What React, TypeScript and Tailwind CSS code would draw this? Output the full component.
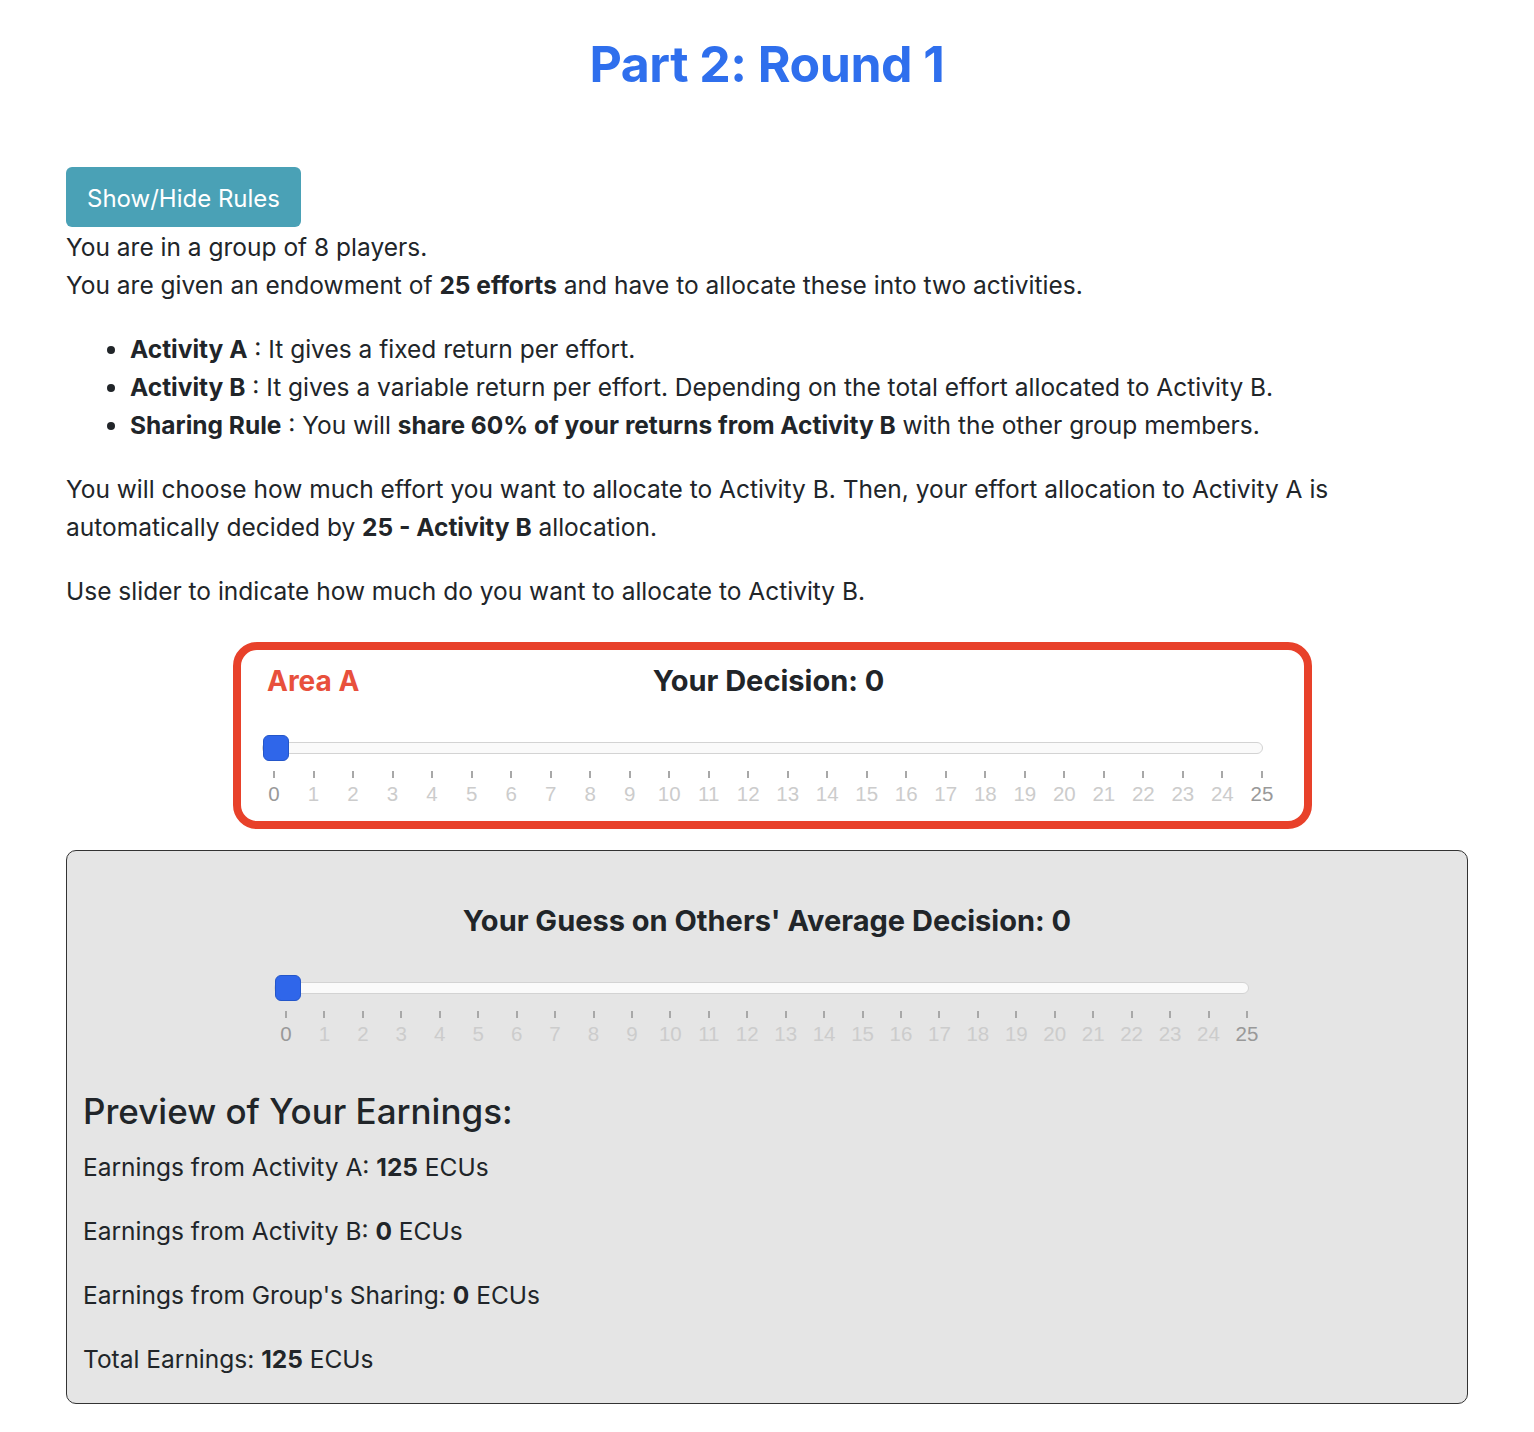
import { useState } from "react"

const ticks = Array.from({ length: 26 }, (_, i) => i) // pip values 0..25

type SliderProps = {
  value: number
  trackWidth: string // tailwind width class for the track
  tickWidth: string // tailwind width class for the pip row
}

// noUiSlider-style track with a square handle and numbered pips underneath
function PipSlider({ value, trackWidth, tickWidth }: SliderProps) {
  return (
    <div className="flex flex-col">
      <div className={`relative h-[12px] rounded-full border border-[#d3d3d3] bg-[#fafafa] ${trackWidth}`}>
        <div className="absolute left-0 top-[-8px] h-[26px] w-[26px] rounded-[6px] border border-[#2456c9] bg-[#2f66ea]" />
      </div>
      <div className={`ml-[12px] mt-[17px] flex justify-between ${tickWidth}`}>
        {ticks.map((t) => (
          <div key={t} className="flex w-0 flex-col items-center">
            <span className="h-[7px] w-[2px] shrink-0 bg-[#a8a8a8]" />
            <span
              className={`mt-[4px] whitespace-nowrap text-[20.5px] leading-[24px] ${
                t === 0 || t === 25 ? "text-[#999999]" : "text-[#cccccc]"
              }`}
              style={{ fontFamily: '"Liberation Sans", Arial, sans-serif' }}
            >
              {t}
            </span>
          </div>
        ))}
      </div>
      <span className="hidden">{value}</span>
    </div>
  )
}

export default function App() {
  const [decision] = useState(0) // own allocation to Activity B
  const [guess] = useState(0) // guess on others' average
  const earningsA = (25 - decision) * 5
  const earningsB = 0
  const sharing = 0

  return (
    <div className="min-h-[1432px] bg-white px-[66px] text-[24.5px] leading-[38px] text-[#212529]" style={{ fontFamily: "Inter, 'Noto Sans', sans-serif" }}>
      <h1 className="pt-[32px] text-center text-[50px] font-bold leading-[64px] tracking-[-0.5px] text-[#2f6fed]">Part 2: Round 1</h1>

      <button className="mt-[71px] h-[60px] w-[235px] rounded-[6px] bg-[#4aa1b6] pt-[3px] text-[24px] text-white">Show/Hide Rules</button>

      <p className="mt-[1px]">You are in a group of 8 players.</p>
      <p>
        You are given an endowment of <b>25 efforts</b> and have to allocate these into two activities.
      </p>

      <ul className="mt-[26px] list-disc pl-[64px]">
        <li><b>Activity A</b> : It gives a fixed return per effort.</li>
        <li><b>Activity B</b> : It gives a variable return per effort. Depending on the total effort allocated to Activity B.</li>
        <li>
          <b>Sharing Rule</b> : You will <b>share 60% of your returns from Activity B</b> with the other group members.
        </li>
      </ul>

      <p className="mt-[26px]">
        You will choose how much effort you want to allocate to Activity B. Then, your effort allocation to Activity A is automatically decided by <b>25 - Activity B</b> allocation.
      </p>

      <p className="mt-[26px]">Use slider to indicate how much do you want to allocate to Activity B.</p>

      {/* Area A: own decision */}
      <div className="ml-[167px] mt-[32px] w-[1079px] rounded-[24px] border-[8px] border-[#e8412a] pb-[15px] pl-[21px] pt-[12px]">
        <div className="grid grid-cols-[1fr_auto_1fr] items-center pr-[29px]">
          <span className="pl-[5px] text-[28px] font-bold text-[#e8503c]">Area A</span>
          <span className="text-[29px] font-bold">Your Decision: {decision}</span>
          <span />
        </div>
        <div className="mt-[42px]">
          <PipSlider value={decision} trackWidth="w-[1001px]" tickWidth="w-[988px]" />
        </div>
      </div>

      {/* Guess + earnings preview */}
      <div className="mt-[21px] rounded-[10px] border border-[#333333] bg-[#e5e5e5] px-[16px] pb-[25px] pt-[51px]">
        <p className="text-center text-[29px] font-bold">Your Guess on Others' Average Decision: {guess}</p>
        <div className="ml-[191px] mt-[42px]">
          <PipSlider value={guess} trackWidth="w-[975px]" tickWidth="w-[961px]" />
        </div>

        <h2 className="mt-[43px] text-[35px] font-medium leading-[44px]">Preview of Your Earnings:</h2>
        <p className="mt-[15px]">Earnings from Activity A: <b>{earningsA}</b> ECUs</p>
        <p className="mt-[26px]">Earnings from Activity B: <b>{earningsB}</b> ECUs</p>
        <p className="mt-[26px]">Earnings from Group's Sharing: <b>{sharing}</b> ECUs</p>
        <p className="mt-[26px]">Total Earnings: <b>{earningsA + earningsB + sharing}</b> ECUs</p>
      </div>
    </div>
  )
}
